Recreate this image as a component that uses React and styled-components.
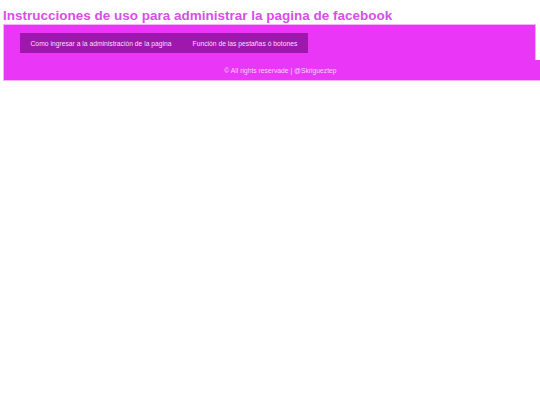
import React from 'react';
import styled, { createGlobalStyle } from 'styled-components';

const GlobalStyle = createGlobalStyle`
  body {
    margin: 0;
    background: #fff;
    font-family: "Liberation Sans", Arial, sans-serif;
  }
`;

const App = () => {
  return (
    <Wrapper>
      <GlobalStyle />
      <Title>Instrucciones de uso para administrar la pagina de facebook</Title>

      <Header>
        <Nav>
          <NavItem>Como ingresar a la administración de la pagina</NavItem>
          <NavItem>Función de las pestañas ó botones</NavItem>
        </Nav>
      </Header>

      <Footer>
        <p>© All rights reservade | @Skrigueztep</p>
      </Footer>
    </Wrapper>
  );
};

const Wrapper = styled.div`
  display: flex;
  flex-direction: column;
  padding-left: 3px;
`;

const Title = styled.h1`
  margin: 8px 0 0;
  font-size: 13.5px;
  line-height: 16px;
  font-weight: bold;
  color: #d84fe6;
`;

const Header = styled.header`
  margin-right: 4px;
  height: 36px;
  box-sizing: border-box;
  padding: 8px 16px 0;
  background-color: #e936f7;
  border: 1px solid #f4b0f9;
  border-bottom: none;
`;

const Nav = styled.nav`
  display: flex;
  width: max-content;
  height: 20px;
  background-color: #9e18ae;
`;

const NavItem = styled.a`
  display: flex;
  align-items: center;
  padding: 0 10.5px;
  font-size: 6.75px;
  color: #f6dff8;
  text-decoration: none;
`;

const Footer = styled.footer`
  height: 21px;
  box-sizing: border-box;
  background-color: #e936f7;
  border: 1px solid #f4b0f9;
  border-top: none;
  border-right: none;
  padding-left: 17px;
  display: flex;
  align-items: center;
  justify-content: center;

  p {
    margin: 0;
    font-size: 6.75px;
    color: #f8d3fa;
  }
`;

export default App;
